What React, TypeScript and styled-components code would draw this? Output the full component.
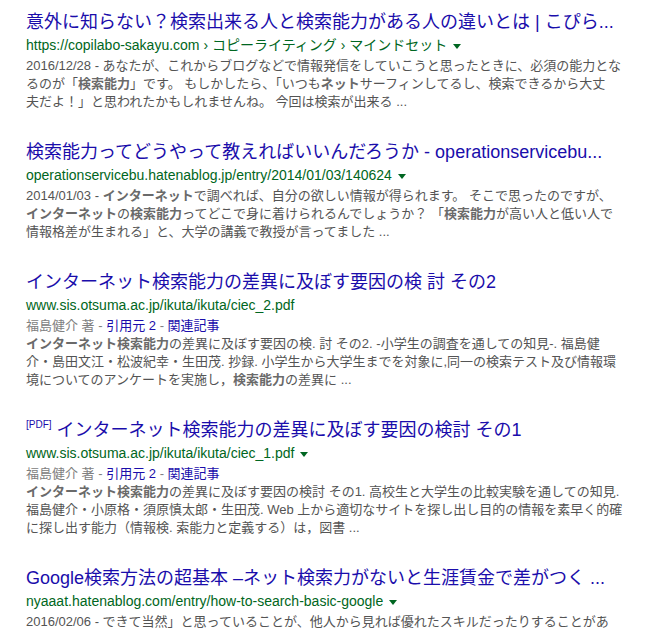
import React from "react";
import styled, { createGlobalStyle } from "styled-components";

const GlobalStyle = createGlobalStyle`
  html, body {
    margin: 0;
    padding: 0;
    background: #fff;
  }
  body {
    font-family: "Liberation Sans", Arial, "Noto Sans CJK JP", sans-serif;
  }
`;

const Page = styled.div`
  padding: 10px 0 0 26px;
  width: 645px;
  overflow: hidden;
`;

const Result = styled.div`
  margin-bottom: 29px;
`;

const Title = styled.a`
  display: block;
  font-size: 18px;
  line-height: 24px;
  color: #1a0dab;
  text-decoration: none;
  white-space: nowrap;
`;

const FileTag = styled.span`
  font-size: 10px;
  line-height: 10px;
  vertical-align: 8px;
  margin-right: 5px;
  color: #1a0dab;
`;

const Url = styled.div`
  margin-top: 2px;
  font-size: 14px;
  line-height: 18px;
  color: #006621;
  white-space: nowrap;
  display: flex;
  align-items: center;
`;

const Arrow = styled.span`
  display: inline-block;
  margin-left: 6px;
  margin-top: 2px;
  width: 0;
  height: 0;
  border-left: 4px solid transparent;
  border-right: 4px solid transparent;
  border-top: 5px solid #006621;
`;

const Snippet = styled.div`
  margin-top: 3px;
  font-size: 13px;
  line-height: 18px;
  color: #545454;
`;

const Line = styled.div`
  white-space: nowrap;
`;

const Meta = styled(Line)`
  color: #808080;
`;

const MetaLink = styled.a`
  color: #1a0dab;
  text-decoration: none;
`;

const Em = styled.b`
  color: #6a6a6a;
  font-weight: bold;
`;

type Item = {
  title: React.ReactNode;
  tag?: string;
  url: string;
  arrow?: boolean;
  meta?: boolean;
  lines: React.ReactNode[];
};

const items: Item[] = [
  {
    title: "意外に知らない？検索出来る人と検索能力がある人の違いとは | こぴら...",
    url: "https://copilabo-sakayu.com › コピーライティング › マインドセット",
    arrow: true,
    lines: [
      "2016/12/28 - あなたが、これからブログなどで情報発信をしていこうと思ったときに、必須の能力とな",
      <>
        るのが「<Em>検索能力</Em>」です。 もしかしたら、「いつも<Em>ネット</Em>サーフィンしてるし、検索できるから大丈
      </>,
      "夫だよ！」と思われたかもしれませんね。 今回は検索が出来る ...",
    ],
  },
  {
    title: "検索能力ってどうやって教えればいいんだろうか - operationservicebu...",
    url: "operationservicebu.hatenablog.jp/entry/2014/01/03/140624",
    arrow: true,
    lines: [
      <>
        2014/01/03 - <Em>インターネット</Em>で調べれば、自分の欲しい情報が得られます。 そこで思ったのですが、
      </>,
      <>
        <Em>インターネット</Em>の<Em>検索能力</Em>ってどこで身に着けられるんでしょうか？ 「<Em>検索能力</Em>が高い人と低い人で
      </>,
      "情報格差が生まれる」と、大学の講義で教授が言ってました ...",
    ],
  },
  {
    title: "インターネット検索能力の差異に及ぼす要因の検 討 その2",
    url: "www.sis.otsuma.ac.jp/ikuta/ikuta/ciec_2.pdf",
    meta: true,
    lines: [
      <>
        <Em>インターネット検索能力</Em>の差異に及ぼす要因の検. 討 その2. -小学生の調査を通しての知見-. 福島健
      </>,
      "介・島田文江・松波紀幸・生田茂. 抄録. 小学生から大学生までを対象に,同一の検索テスト及び情報環",
      <>
        境についてのアンケートを実施し，<Em>検索能力</Em>の差異に ...
      </>,
    ],
  },
  {
    title: "インターネット検索能力の差異に及ぼす要因の検討 その1",
    tag: "[PDF]",
    url: "www.sis.otsuma.ac.jp/ikuta/ikuta/ciec_1.pdf",
    arrow: true,
    meta: true,
    lines: [
      <>
        <Em>インターネット検索能力</Em>の差異に及ぼす要因の検討 その1. 高校生と大学生の比較実験を通しての知見.
      </>,
      "福島健介・小原格・須原慎太郎・生田茂. Web 上から適切なサイトを探し出し目的の情報を素早く的確",
      "に探し出す能力（情報検. 索能力と定義する）は，図書 ...",
    ],
  },
  {
    title: "Google検索方法の超基本 –ネット検索力がないと生涯賃金で差がつく ...",
    url: "nyaaat.hatenablog.com/entry/how-to-search-basic-google",
    arrow: true,
    lines: [
      "2016/02/06 - できて当然」と思っていることが、他人から見れば優れたスキルだったりすることがあ",
    ],
  },
];

export default function App() {
  return (
    <>
      <GlobalStyle />
      <Page>
        {items.map((it, i) => (
          <Result key={i}>
            <Title href="#">
              {it.tag && <FileTag>{it.tag}</FileTag>}
              {it.title}
            </Title>
            <Url>
              {it.url}
              {it.arrow && <Arrow />}
            </Url>
            <Snippet>
              {it.meta && (
                <Meta>
                  福島健介 著 - <MetaLink href="#">引用元 2</MetaLink> -{" "}
                  <MetaLink href="#">関連記事</MetaLink>
                </Meta>
              )}
              {it.lines.map((l, j) => (
                <Line key={j}>{l}</Line>
              ))}
            </Snippet>
          </Result>
        ))}
      </Page>
    </>
  );
}
